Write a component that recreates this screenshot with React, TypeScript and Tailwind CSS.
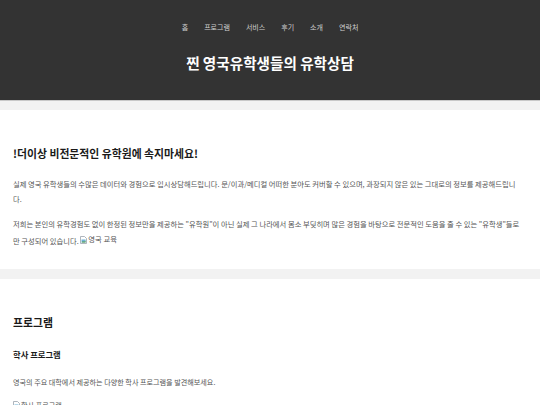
import type { ReactNode } from 'react';

const navItems = ['홈', '프로그램', '서비스', '후기', '소개', '연락처'];

function BrokenImage({ alt }: { alt: string }) {
    return (
        <span className="inline-flex items-center align-baseline">
            <svg width="7" height="8" viewBox="0 0 7 8" className="mr-[1px]">
                <path d="M0.5 0.5h4l2 2v5h-6z" fill="#fff" stroke="#9aa3ad" strokeWidth="0.8" />
                <rect x="1.5" y="3.5" width="4" height="3" fill="#6fb3d8" />
                <path d="M1.5 6.5l1.5-1.6 1 1 1.5-1.4v2z" fill="#5a9c4a" />
            </svg>
            {alt}
        </span>
    );
}

function Section({ children }: { children: ReactNode }) {
    return <section className="bg-white pl-[13px] pr-[19px] pt-[33px] pb-[20px]">{children}</section>;
}

export default function App() {
    return (
        <div className="min-h-screen bg-[#f2f2f2] font-['Noto_Sans_CJK_KR','Noto_Sans',sans-serif]">
            <header className="flex h-[101px] flex-col items-center border-b border-[#c8c8c8] bg-[#333333] pt-[20px]">
                <nav className="flex gap-[16px] text-[7px] leading-[14px] text-[#cfcfcf]">
                    {navItems.map((item) => (
                        <span key={item}>{item}</span>
                    ))}
                </nav>
                <h1 className="mt-[17px] text-[14.6px] font-bold leading-[24px] text-white">찐 영국유학생들의 유학상담</h1>
            </header>

            <main className="flex flex-col gap-[10px] pt-[9px]">
                <Section>
                    <h2 className="text-[10.85px] font-bold leading-[20px] text-[#1a1a1a]">!더이상 비전문적인 유학원에 속지마세요!</h2>
                    <p className="mt-[14px] text-[7.3px] leading-[15px] text-[#555]">
                        실제 영국 유학생들의 수많은 데이터와 경험으로 입시상담해드립니다. 문/이과/메디컬 어떠한 분야도 커버할 수 있으며, 과장되지 않은 있는 그대로의 정보를 제공해드립니다.
                    </p>
                    <p className="mt-[10px] text-[7.3px] leading-[15px] text-[#555]">
                        저희는 본인의 유학경험도 없이 한정된 정보만을 제공하는 "유학원"이 아닌 실제 그 나라에서 몸소 부딪히며 많은 경험을 바탕으로 전문적인 도움을 줄 수 있는 "유학생"들로만 구성되어 있습니다. <BrokenImage alt="영국 교육" />
                    </p>
                </Section>

                <Section>
                    <h2 className="text-[10.85px] font-bold leading-[20px] text-[#1a1a1a]">프로그램</h2>
                    <h3 className="mt-[14px] text-[8.3px] font-bold leading-[16px] text-[#1a1a1a]">학사 프로그램</h3>
                    <p className="mt-[13px] text-[7.1px] leading-[15px] text-[#555]">영국의 주요 대학에서 제공하는 다양한 학사 프로그램을 발견해보세요.</p>
                    <p className="mt-[8px] text-[7.1px] leading-[15px] text-[#555]">
                        <BrokenImage alt="학사 프로그램" />
                    </p>
                </Section>
            </main>
        </div>
    );
}
